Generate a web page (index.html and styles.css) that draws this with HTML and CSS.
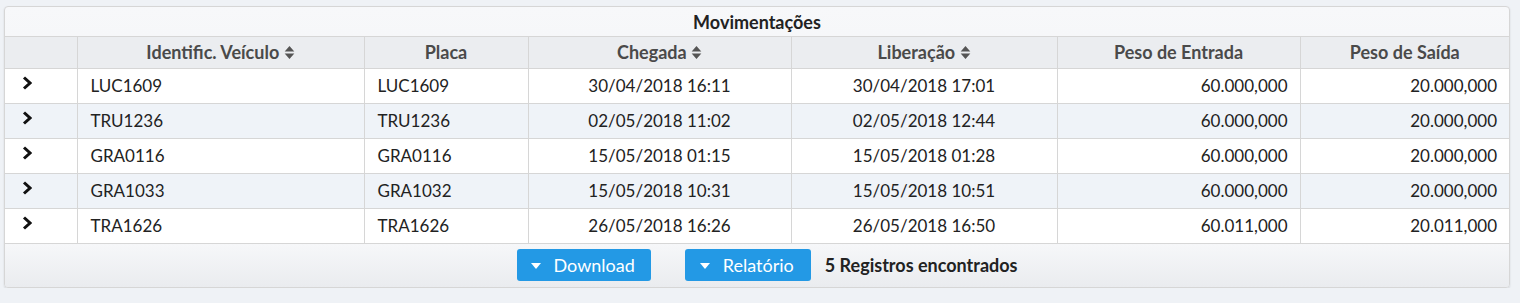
FILE: index.html
```html
<!DOCTYPE html>
<html lang="pt">
<head>
<meta charset="utf-8">
<title>Movimentações</title>
<link rel="stylesheet" href="styles.css">
</head>
<body>
<div class="panel">
  <div class="caption">Movimentações</div>
  <table class="grid">
    <colgroup>
      <col class="c-exp"><col class="c-id"><col class="c-placa"><col class="c-cheg"><col class="c-lib"><col class="c-pe"><col class="c-ps">
    </colgroup>
    <thead>
      <tr>
        <th></th>
        <th>Identific. Veículo <span class="sort"><svg viewBox="0 0 10 14" width="11" height="15"><path d="M0.5 6 L5 1 L9.5 6 Z M0.5 8 L5 13 L9.5 8 Z" fill="currentColor"/></svg></span></th>
        <th>Placa</th>
        <th>Chegada <span class="sort"><svg viewBox="0 0 10 14" width="11" height="15"><path d="M0.5 6 L5 1 L9.5 6 Z M0.5 8 L5 13 L9.5 8 Z" fill="currentColor"/></svg></span></th>
        <th>Liberação <span class="sort"><svg viewBox="0 0 10 14" width="11" height="15"><path d="M0.5 6 L5 1 L9.5 6 Z M0.5 8 L5 13 L9.5 8 Z" fill="currentColor"/></svg></span></th>
        <th>Peso de Entrada</th>
        <th>Peso de Saída</th>
      </tr>
    </thead>
    <tbody>
      <tr>
        <td class="exp"><svg class="chev" viewBox="0 0 10 14" width="10" height="14"><path d="M2 1.5 L8 7 L2 12.5" fill="none" stroke="currentColor" stroke-width="3"/></svg></td>
        <td>LUC1609</td><td>LUC1609</td><td class="ctr">30/04/2018 16:11</td><td class="ctr">30/04/2018 17:01</td><td class="num">60.000,000</td><td class="num">20.000,000</td>
      </tr>
      <tr>
        <td class="exp"><svg class="chev" viewBox="0 0 10 14" width="10" height="14"><path d="M2 1.5 L8 7 L2 12.5" fill="none" stroke="currentColor" stroke-width="3"/></svg></td>
        <td>TRU1236</td><td>TRU1236</td><td class="ctr">02/05/2018 11:02</td><td class="ctr">02/05/2018 12:44</td><td class="num">60.000,000</td><td class="num">20.000,000</td>
      </tr>
      <tr>
        <td class="exp"><svg class="chev" viewBox="0 0 10 14" width="10" height="14"><path d="M2 1.5 L8 7 L2 12.5" fill="none" stroke="currentColor" stroke-width="3"/></svg></td>
        <td>GRA0116</td><td>GRA0116</td><td class="ctr">15/05/2018 01:15</td><td class="ctr">15/05/2018 01:28</td><td class="num">60.000,000</td><td class="num">20.000,000</td>
      </tr>
      <tr>
        <td class="exp"><svg class="chev" viewBox="0 0 10 14" width="10" height="14"><path d="M2 1.5 L8 7 L2 12.5" fill="none" stroke="currentColor" stroke-width="3"/></svg></td>
        <td>GRA1033</td><td>GRA1032</td><td class="ctr">15/05/2018 10:31</td><td class="ctr">15/05/2018 10:51</td><td class="num">60.000,000</td><td class="num">20.000,000</td>
      </tr>
      <tr>
        <td class="exp"><svg class="chev" viewBox="0 0 10 14" width="10" height="14"><path d="M2 1.5 L8 7 L2 12.5" fill="none" stroke="currentColor" stroke-width="3"/></svg></td>
        <td>TRA1626</td><td>TRA1626</td><td class="ctr">26/05/2018 16:26</td><td class="ctr">26/05/2018 16:50</td><td class="num">60.011,000</td><td class="num">20.011,000</td>
      </tr>
    </tbody>
  </table>
  <div class="footer">
    <button class="btn"><svg class="caret" viewBox="0 0 10 6" width="10" height="6"><path d="M0 0 L10 0 L5 6 Z" fill="currentColor"/></svg>Download</button>
    <button class="btn btn2"><svg class="caret" viewBox="0 0 10 6" width="10" height="6"><path d="M0 0 L10 0 L5 6 Z" fill="currentColor"/></svg>Relatório</button>
    <span class="count">5 Registros encontrados</span>
  </div>
</div>
</body>
</html>
```
FILE: styles.css
```css
html, body {
  margin: 0;
  padding: 0;
  background: #eff2f6;
}
body {
  padding: 6px 10px 0 4px;
  font-family: Lato, "Open Sans", sans-serif;
  font-size: 17px;
  color: #222;
}
.panel {
  width: 1506px;
  border: 1px solid #d6d6d6;
  border-radius: 4px;
  background: linear-gradient(#f7f8fa, #eceef1);
  box-shadow: 0 1px 2px rgba(0,0,0,0.12);
  box-sizing: border-box;
  overflow: hidden;
}
.caption {
  height: 30px;
  line-height: 30px;
  text-align: center;
  font-weight: 700;
  font-size: 18px;
  color: #222;
  border-bottom: 1px solid #d6d6d6;
  box-sizing: border-box;
}
.grid {
  width: 100%;
  border-collapse: collapse;
  table-layout: fixed;
}
.c-exp { width: 72px; }
.c-id { width: 287px; }
.c-placa { width: 164px; }
.c-cheg { width: 263px; }
.c-lib { width: 266px; }
.c-pe { width: 243px; }
.c-ps { width: auto; }
.grid th {
  height: 31px;
  padding: 0 10px;
  font-weight: 700;
  font-size: 18px;
  color: #4a4a4a;
  background: #ebedf0;
  border-left: 1px solid #d6d6d6;
  border-bottom: 1px solid #d6d6d6;
  text-align: center;
  white-space: nowrap;
  box-sizing: border-box;
}
.grid th:first-child, .grid td:first-child { border-left: none; }
.sort {
  display: inline-block;
  vertical-align: -1px;
  color: #555;
}
.sort svg { display: block; }
.grid td {
  height: 35px;
  padding: 0 13px;
  border-left: 1px solid #d6d6d6;
  border-bottom: 1px solid #d6d6d6;
  background: #fff;
  color: #222;
  white-space: nowrap;
  box-sizing: border-box;
}
.grid tbody tr:nth-child(even) td { background: #eff3f8; }
.grid td.ctr { text-align: center; }
.grid td.num { text-align: right; padding-right: 12px; }
.grid td.exp { padding: 0 0 0 17px; vertical-align: top; padding-top: 7px; }
.chev { display: block; color: #111; }
.footer {
  height: 43px;
  display: flex;
  align-items: center;
  justify-content: center;
  padding-left: 20px;
  background: linear-gradient(#f6f7f9, #eaecef);
}
.btn {
  display: inline-flex;
  align-items: center;
  height: 32px;
  padding: 0 16px 0 14px;
  border: none;
  border-radius: 3px;
  background: #2399e5;
  color: #fff;
  font-family: Lato, "Open Sans", sans-serif;
  font-size: 18px;
  gap: 13px;
}
.btn2 { margin-left: 34px; padding-right: 17px; padding-left: 15px; }
.caret { display: block; margin-top: 2px; }
.count {
  margin-left: 14px;
  font-weight: 700;
  font-size: 18px;
  color: #222;
}
```
